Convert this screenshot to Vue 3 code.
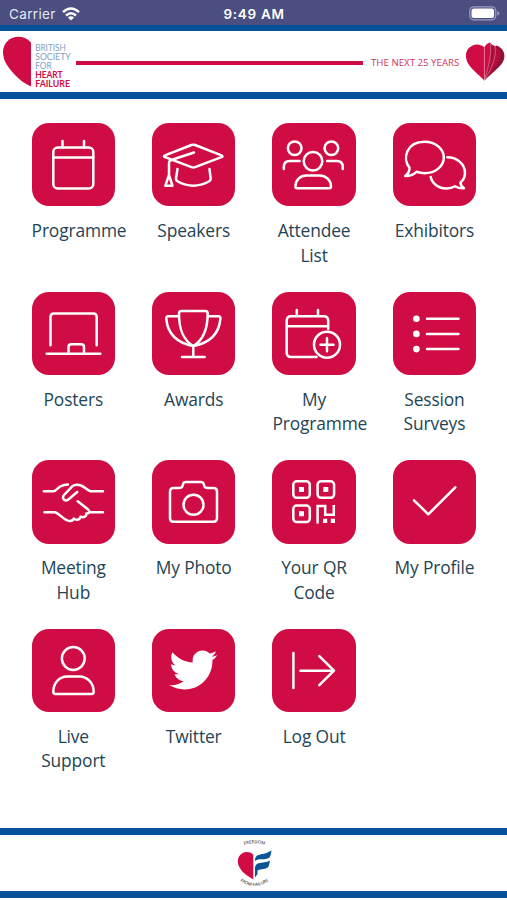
<script setup>
import { ref } from 'vue';

const carrier = ref('Carrier');
const clock = ref('9:49 AM');

// each icon is drawn on an 83.4 x 83.4 grid, the size of a tile
const items = [
  {
    label: 'Programme',
    icon: '<rect x="21.3" y="24.5" width="40" height="41" rx="4.5"/><path d="M21.3 34.5h40M30.5 18v6.5M52 18v6.5"/>',
  },
  {
    label: 'Speakers',
    icon: '<path d="M13 32.3 39.5 22q1.8-.7 3.6 0l26.4 10.3q2 .9 0 1.9L43.1 44.1q-1.8.7-3.6 0L13 34.2q-2-1 0-1.9zM42 29.5 20 36.8q-3 1-3 3.2v12l-3.6 10.7h7L17 52M25.5 46 24 55.5q-.2 2 1.8 3 15.5 8.4 31 0 2-1 1.9-3L57.5 46"/>',
  },
  {
    label: 'Attendee List',
    icon: '<circle cx="22.7" cy="25.3" r="6.8"/><circle cx="59.4" cy="25.3" r="6.8"/><circle cx="41" cy="38.3" r="9.3"/><path d="M11.8 46v-2q0-6 6-6h9.8M70.8 46v-2q0-6-6-6h-9.6M23.500 63.500c0-6.500 4.500-11 11-11h13c6.500 0 11.500 4.500 11.500 11q0 1.800-1.800 1.800h-32q-1.700 0-1.700-1.800z"/>',
  },
  {
    label: 'Exhibitors',
    icon: '<path d="M16.500 44.800C9 35.500 13.500 18.800 31.500 18.800c11 0 19.300 7 19.300 15.700S42.500 50.200 31.500 50.200c-3 0-5-.300-8-1.400-3 2.800-7 4.200-11.300 4.200 3-2.200 4.500-5 4.300-8.200zM54.300 34.300c10 0 17.700 7 17.700 15.700 0 3.700-1.500 7-4.500 9.500 0 2.200 1 4 3.500 5.800-3.500.2-6.500-.5-9-2-2.500 1.500-5.500 2.200-8.500 2.200-8 0-14.500-5-15.800-11.500"/>',
  },
  {
    label: 'Posters',
    icon: '<path d="M18.500 53.300V25q0-3.500 3.500-3.500h39.200q3.500 0 3.500 3.500v28.300M14.700 61.700h53.600M36.500 61.500V55q0-2.800 2.800-2.800h9.900q2.800 0 2.800 2.800v6.500"/>',
  },
  {
    label: 'Awards',
    icon: '<path d="M29.500 19h23.700q2.500 0 2.500 2.500C55.700 37 52 47.500 41.300 54 30.600 47.500 27 37 27 21.500Q27 19 29.500 19zM27 24.300H16.500q-2.500 0-2.200 2.500C15.500 40 23 50.500 41.300 54M55.700 24.300h10.500q2.500 0 2.200 2.500C67.200 40 59.500 50.500 41.300 54v10.800M30 65h22.700"/>',
  },
  {
    label: 'My Programme',
    icon: '<path d="M44.500 65H19.200q-4.500 0-4.500-4.500V29q0-4.700 4.500-4.700h32.500q4.500 0 4.500 4.700v8M14.700 34.300h41.500M24.800 18v6.300M46 18v6.300M48.500 52.700h13M55 46.200v13"/><circle cx="55" cy="52.700" r="13"/>',
  },
  {
    label: 'Session Surveys',
    icon: '<path d="M34 26.700h31.500M34 41.900h31.500M34 57.100h31.500"/><g fill="#fff" stroke="none"><circle cx="23.400" cy="26.700" r="3.300"/><circle cx="23.400" cy="41.900" r="3.300"/><circle cx="23.400" cy="57.100" r="3.300"/></g>',
  },
  {
    label: 'Meeting Hub',
    icon: '<path d="M11.800 31.300h9.500c2.500 0 4-3.500 7.200-5 2.300-1.100 5-1.800 7.500-1.800M71 31.300H58.500c-3.500-1-6-4.500-9.500-5.800-3-1.200-6.500-1-8.800.8L32 35c-2 2.500-.5 5.700 2.200 5.400 1 0 1.800-.5 2.500-1.200l8.500-7.200M12.500 52.300h10.700c4 1.500 7 5.700 11.300 7.700 2.800 1.500 5.800 1.300 7.500-1.500 2 2.200 5.500 1.800 6.500-1.700 3 1 6.500-.5 5.800-3.300 1.500.2 2.500-.2 3.200-1.200H71M57.500 52.300c0-1.500-1-2.500-2.300-3.500l-9.500-7.500"/>',
  },
  {
    label: 'My Photo',
    icon: '<path d="M21.500 28H27q3 0 3.500-2l.6-2q.6-2 2.700-2h15.200q2.100 0 2.700 2l.6 2q.5 2 3.500 2h5.700q3.500 0 3.500 3.500v26.800q0 3.500-3.500 3.500h-40q-3.500 0-3.500-3.500V31.500q0-3.500 3.500-3.500z"/><circle cx="41.500" cy="44.700" r="10"/>',
  },
  {
    label: 'Your QR Code',
    icon: '<rect x="21.300" y="21.300" width="16.500" height="16.500" rx="3.500"/><rect x="45.600" y="21.300" width="16.500" height="16.500" rx="3.500"/><rect x="21.300" y="45.600" width="16.500" height="16.500" rx="3.500"/><path stroke-linecap="butt" stroke-linejoin="miter" d="M45.600 63.400V46h7.600v8.800h8.600V45"/><path fill="#fff" stroke="none" d="M27 27h5v5h-5zM51.300 27h5v5h-5zM27 51.300h5v5h-5zM51 58.800h4.200v4.200H51zM58.800 58.800H63v4.200h-4.200z"/>',
  },
  {
    label: 'My Profile',
    icon: '<path d="M21 40.300 35.300 54.300 62.300 27.300"/>',
  },
  {
    label: 'Live Support',
    icon: '<circle cx="41.300" cy="29.500" r="11.400"/><path d="M21.300 62.800C21.300 53.500 28 47.500 35 47.500h12.700c7 0 14 6 14 15.300q0 2.200-2.200 2.200h-36q-2.200 0-2.200-2.200z"/>',
  },
  {
    label: 'Twitter',
    icon: '<path fill="#fff" stroke="none" transform="translate(17.300 17) scale(2)" d="M23.954 4.569c-.885.389-1.830.654-2.825.775 1.014-.611 1.794-1.574 2.163-2.723-.951.555-2.005.959-3.127 1.184-.896-.959-2.173-1.559-3.591-1.559-2.717 0-4.920 2.203-4.920 4.917 0 .390.045.765.127 1.124C7.691 8.094 4.066 6.130 1.640 3.161c-.427.722-.666 1.561-.666 2.475 0 1.710.870 3.213 2.188 4.096-.807-.026-1.566-.248-2.228-.616v.061c0 2.385 1.693 4.374 3.946 4.827-.413.111-.849.171-1.296.171-.314 0-.615-.030-.916-.086.631 1.953 2.445 3.377 4.604 3.417-1.680 1.319-3.809 2.105-6.102 2.105-.390 0-.779-.023-1.170-.067 2.189 1.394 4.768 2.209 7.557 2.209 9.054 0 13.999-7.496 13.999-13.986 0-.209 0-.420-.015-.630.961-.689 1.800-1.560 2.460-2.548z"/>',
  },
  {
    label: 'Log Out',
    icon: '<path d="M21.400 24v35M28.500 41.700H62M47.300 27.200 62 41.700 47.300 56.200"/>',
  },
];
</script>

<template>
  <div class="screen">
    <div class="status-bar">
      <div class="carrier">
        <span>{{ carrier }}</span>
        <svg class="wifi" viewBox="0 0 18 14" width="18" height="14">
          <g fill="none" stroke="#fff" stroke-width="2.5">
            <path d="M1 5.200Q9-2.200 17 5.200" />
            <path d="M4 8.500q5-4.400 10 0" />
          </g>
          <path d="M5.900 10.400q3.100-2.400 6.200 0L9 13.600z" fill="#fff" />
        </svg>
      </div>
      <div class="clock">{{ clock }}</div>
      <svg class="battery" viewBox="0 0 31 15" width="31" height="15">
        <rect x=".8" y=".8" width="26" height="13" rx="4" fill="none" stroke="#9c9fbd" stroke-width="1.200" />
        <rect x="2.500" y="2.500" width="22.600" height="9.600" rx="2.500" fill="#fff" />
        <path d="M28.300 5v4.600q2-.6 2-2.300t-2-2.300z" fill="#9c9fbd" />
      </svg>
    </div>

    <div class="banner">
      <svg class="logo" viewBox="0 0 76 60" width="76" height="60">
        <path d="M31 10.500C27 6.500 23 4.800 18.500 4.800 9.500 4.800 3 11.500 3 20c0 9 5.500 16 12 23 4.800 5 10 9 16 11.500z" fill="#cf0c43" />
        <g class="logo-text" fill="#7d9fc2">
          <text x="35.200" y="19" textLength="30.500" lengthAdjust="spacingAndGlyphs">BRITISH</text>
          <text x="35.200" y="28" textLength="35.500" lengthAdjust="spacingAndGlyphs">SOCIETY</text>
          <text x="35.200" y="37" textLength="16.500" lengthAdjust="spacingAndGlyphs">FOR</text>
        </g>
        <g class="logo-text strong" fill="#cf0c43">
          <text x="35.200" y="46" textLength="27.500" lengthAdjust="spacingAndGlyphs">HEART</text>
          <text x="35.200" y="55" textLength="34.800" lengthAdjust="spacingAndGlyphs">FAILURE</text>
        </g>
      </svg>
      <div class="line"></div>
      <div class="tagline">THE NEXT 25 YEARS</div>
      <svg class="folded-heart" viewBox="0 0 40 39" width="40" height="39">
        <path d="M19.300 5.200C14.500.8 7.500 2 3.800 6.100c-4.200 4.700-3.500 11.600.2 16.900 4 5.700 10 9.800 15.300 15.500z" fill="#cf0c43" />
        <path d="M31 3.500c5 1 9 6 8.400 11.500-.6 7.500-8 12-20.100 23.500z" fill="#8f1136" />
        <path d="M27 3c5.500 1 8.500 4.500 8.500 9.500 0 8.500-7 15-16.200 26z" fill="#b30d3b" />
        <path d="M24.500.500c3.500 2 5.500 5.500 5 11.500-.6 9-4.500 16.500-10.200 26.500z" fill="#a81139" />
        <path d="M19.300 5.200q2-3.500 5.200-4.700c2.500 6 1.500 17-5.200 38z" fill="#cf0c43" />
        <g fill="none" stroke="#e9a3b5" stroke-width=".5">
          <path d="M19.300 5.200v33M25.500 1.500q1.500 14-6.200 37M30 4q3 13-10.700 34.500" />
        </g>
      </svg>
    </div>

    <div class="menu">
      <a v-for="item in items" :key="item.label" class="menu-item">
        <div class="tile">
          <svg class="icon" viewBox="0 0 83.400 83.400" v-html="item.icon"></svg>
        </div>
        <div class="label">{{ item.label }}</div>
      </a>
    </div>

    <div class="footer">
      <svg viewBox="0 0 50 56" width="50" height="56">
        <defs>
          <path id="arc-top" d="M9 13Q25.500 3.500 42 13" />
          <path id="arc-bottom" d="M8 43.500Q25 58.500 43 43.500" />
        </defs>
        <text class="arc-text"><textPath href="#arc-top" startOffset="50%" text-anchor="middle">FREEDOM</textPath></text>
        <text class="arc-text"><textPath href="#arc-bottom" startOffset="50%" text-anchor="middle">FROM FAILURE</textPath></text>
        <path d="M24.300 19.500C19.500 15 12.500 17 10 21.500c-3.200 6 .5 12.500 5 16.500 2.700 2.400 5.500 4 9.300 6.500z" fill="#cf0c43" />
        <path d="M26 26c0-9 7-4.500 16.500-10.500-.5 3.500-1 5.500-2 7-5 3.500-10.500 0-14.500 3.500z" fill="#0a5596" />
        <path d="M26 33.500c.5-8 7-4 15-8-.5 3-1 5.200-2 6.700-4.500 3-7.500 1.300-10.500 3.300V39L26 42.500z" fill="#0a5596" />
      </svg>
    </div>
  </div>
</template>

<style>
body {
  margin: 0;
  background: #fff;
}
</style>

<style scoped>
.screen {
  display: flex;
  flex-direction: column;
  width: 507px;
  height: 900px;
  overflow: hidden;
  background: #fff;
  font-family: "Open Sans", sans-serif;
}

.status-bar {
  display: grid;
  grid-template-columns: 1fr auto 1fr;
  align-items: center;
  box-sizing: border-box;
  height: 25px;
  padding: 2px 7px 0 9px;
  background: #4a4e80;
  color: #fff;
  font-family: Inter, sans-serif;
  font-size: 13.5px;
}

.carrier {
  display: flex;
  align-items: center;
  gap: 6px;
  color: #e6e6f0;
  letter-spacing: 0.35px;
}

.clock {
  margin-right: 1px;
  font-weight: 600;
  letter-spacing: 0.7px;
}

.battery {
  justify-self: end;
}

.banner {
  display: flex;
  align-items: center;
  box-sizing: border-box;
  height: 74px;
  border-top: 6px solid #05529a;
  border-bottom: 7px solid #05529a;
}

.logo {
  flex: none;
}

.logo-text {
  font-family: Lato, sans-serif;
  font-size: 9.2px;
}

.strong {
  font-weight: 700;
}

.line {
  width: 287px;
  height: 4px;
  margin-top: 2px;
  background: #cf0c43;
}

.tagline {
  width: 89px;
  margin: 2px 5px 0 8px;
  color: #cf3560;
  font-size: 9.7px;
  white-space: nowrap;
}

.folded-heart {
  flex: none;
}

.menu {
  display: grid;
  grid-template-columns: repeat(4, 83.4px);
  grid-auto-rows: 168.6px;
  column-gap: 37px;
  flex: 1;
  padding: 24px 0 0 31.6px;
}

.tile {
  height: 83.4px;
  border-radius: 17px;
  background: #cf0c43;
}

.icon {
  display: block;
  width: 83.4px;
  height: 83.4px;
  fill: none;
  stroke: #fff;
  stroke-width: 2.5;
  stroke-linecap: round;
  stroke-linejoin: round;
}

.label {
  margin-top: 11.7px;
  color: #1f4556;
  font-size: 17.4px;
  line-height: 24.6px;
  letter-spacing: -0.15px;
  text-align: center;
}

.footer {
  display: flex;
  justify-content: center;
  box-sizing: border-box;
  height: 70px;
  margin-bottom: 2px;
  border-top: 7px solid #05529a;
  border-bottom: 7px solid #05529a;
}

.arc-text {
  fill: #555;
  font-size: 4.4px;
  font-weight: 600;
}
</style>
